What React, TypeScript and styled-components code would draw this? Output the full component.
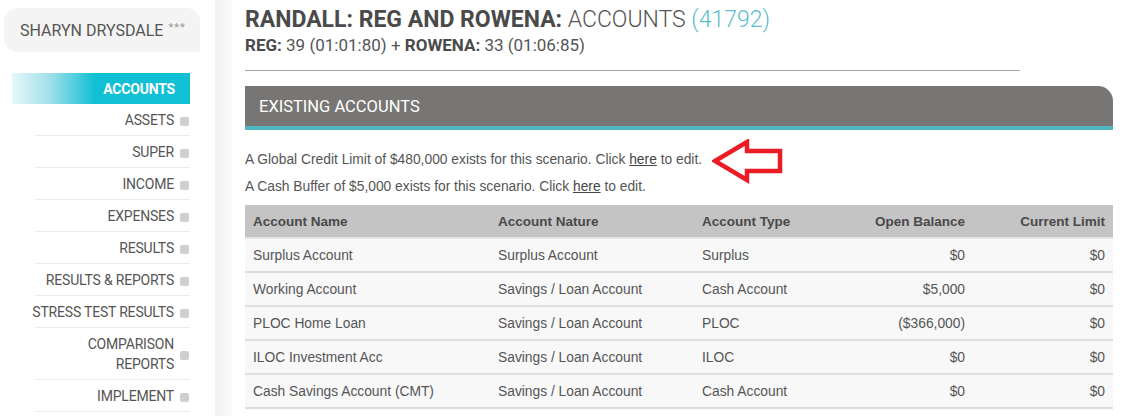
import styled, { createGlobalStyle } from 'styled-components'

const GlobalStyle = createGlobalStyle`
  html, body {
    margin: 0;
    padding: 0;
    background: #fff;
  }
  body {
    font-family: Roboto, 'Liberation Sans', sans-serif;
    color: #555;
  }
`

const Page = styled.div`
  display: flex;
  width: 1128px;
  min-height: 416px;
  overflow: hidden;
`

const Sidebar = styled.aside`
  width: 215px;
  flex-shrink: 0;
  padding-top: 8px;
  box-sizing: border-box;
`

const UserBox = styled.div`
  margin-left: 4px;
  width: 196px;
  height: 44px;
  box-sizing: border-box;
  padding-left: 16px;
  display: flex;
  align-items: center;
  gap: 5px;
  background: #f4f4f4;
  border-radius: 14px 14px 0 14px;
  font-size: 16px;
  color: #555;
  white-space: nowrap;
`

const Stars = styled.span`
  font-size: 11px;
  color: #999;
  letter-spacing: 1px;
  position: relative;
  top: -3px;
`

const Nav = styled.nav`
  margin: 21px 0 0 12px;
  width: 178px;
`

const NavItem = styled.div<{ $active?: boolean }>`
  display: flex;
  align-items: center;
  justify-content: flex-end;
  gap: 6px;
  box-sizing: border-box;
  min-height: ${(p) => (p.$active ? 31 : 32)}px;
  padding: ${(p) => (p.$active ? '0 15px 0 0' : '6px 1px 5px 0')};
  margin-left: ${(p) => (p.$active ? 0 : 23)}px;
  font-size: 14px;
  letter-spacing: -0.2px;
  line-height: 20px;
  text-align: right;
  white-space: nowrap;
  color: ${(p) => (p.$active ? '#fff' : '#555')};
  font-weight: ${(p) => (p.$active ? 700 : 400)};
  background: ${(p) =>
    p.$active
      ? 'linear-gradient(to right, #e6f8fa 0%, #9fdfe9 22%, #12c0d6 46%, #12c0d6 100%)'
      : 'transparent'};
  border-bottom: ${(p) => (p.$active ? 'none' : '1px solid #ececec')};
`

const Bullet = styled.span`
  width: 9px;
  height: 9px;
  border-radius: 2px;
  background: #cfcfcf;
  flex-shrink: 0;
  margin-top: 3px;
`

const Gutter = styled.div`
  width: 17px;
  flex-shrink: 0;
  background: linear-gradient(to right, #f1f1f1, #fbfbfb);
`

const Main = styled.main`
  flex: 1;
  padding: 5px 15px 0 13px;
  min-width: 0;
`

const Title = styled.h1`
  margin: 0;
  font-size: 23px;
  line-height: 30px;
  font-weight: 300;
  color: #555;
  white-space: nowrap;
  b {
    font-weight: 700;
    color: #4a4a4a;
  }
`

const Count = styled.span`
  color: #5bbdca;
`

const Subtitle = styled.div`
  font-size: 17px;
  line-height: 20px;
  color: #555;
  b {
    font-weight: 700;
    color: #4a4a4a;
  }
`

const Rule = styled.hr`
  width: 775px;
  margin: 15px 0 0;
  border: none;
  border-top: 1px solid #a2a2a2;
`

const SectionBar = styled.div`
  margin-top: 15px;
  height: 40px;
  display: flex;
  align-items: center;
  padding-left: 14px;
  background: #787674;
  border-bottom: 4px solid #4db8c4;
  border-top-right-radius: 15px;
  color: #fff;
  font-size: 16.5px;
`

const Info = styled.div`
  position: relative;
  padding-top: 16px;
  font-family: 'Liberation Sans', Arial, sans-serif;
  font-size: 13.8px;
  line-height: 27px;
  color: #555;
  a {
    color: #444;
    text-decoration: underline;
  }
`

const Arrow = styled.svg`
  position: absolute;
  left: 467px;
  top: 9px;
`

const Table = styled.table`
  margin-top: 5px;
  width: 100%;
  table-layout: fixed;
  border-collapse: collapse;
  font-family: 'Liberation Sans', Arial, sans-serif;
  font-size: 13.8px;
  color: #555;
`

const Th = styled.th<{ $right?: boolean; $w: number }>`
  height: 33px;
  padding: 0 8px;
  background: #c4c4c4;
  color: #4a4a4a;
  font-weight: 700;
  font-size: 13.5px;
  text-align: ${(p) => (p.$right ? 'right' : 'left')};
  width: ${(p) => p.$w}px;
  box-sizing: border-box;
  border-bottom: 2px solid #e4e4e4;
`

const Td = styled.td<{ $right?: boolean }>`
  height: 32px;
  padding: 0 8px;
  background: #f8f8f8;
  text-align: ${(p) => (p.$right ? 'right' : 'left')};
  white-space: nowrap;
  border-bottom: 2px solid #dedede;
`

const navItems = [
  'ASSETS',
  'SUPER',
  'INCOME',
  'EXPENSES',
  'RESULTS',
  'RESULTS & REPORTS',
  'STRESS TEST RESULTS',
  'COMPARISON|REPORTS',
  'IMPLEMENT',
]

const rows = [
  ['Surplus Account', 'Surplus Account', 'Surplus', '$0', '$0'],
  ['Working Account', 'Savings / Loan Account', 'Cash Account', '$5,000', '$0'],
  ['PLOC Home Loan', 'Savings / Loan Account', 'PLOC', '($366,000)', '$0'],
  ['ILOC Investment Acc', 'Savings / Loan Account', 'ILOC', '$0', '$0'],
  ['Cash Savings Account (CMT)', 'Savings / Loan Account', 'Cash Account', '$0', '$0'],
]

export default function App() {
  return (
    <>
      <GlobalStyle />
      <Page>
        <Sidebar>
          <UserBox>
            SHARYN DRYSDALE <Stars>***</Stars>
          </UserBox>
          <Nav>
            <NavItem $active>ACCOUNTS</NavItem>
            {navItems.map((item) => (
              <NavItem key={item}>
                <span>
                  {item.split('|').map((part, i) => (
                    <span key={part}>
                      {i > 0 && <br />}
                      {part}
                    </span>
                  ))}
                </span>
                <Bullet />
              </NavItem>
            ))}
          </Nav>
        </Sidebar>
        <Gutter />
        <Main>
          <Title>
            <b>RANDALL: REG AND ROWENA:</b> ACCOUNTS <Count>(41792)</Count>
          </Title>
          <Subtitle>
            <b>REG:</b> 39 (01:01:80) + <b>ROWENA:</b> 33 (01:06:85)
          </Subtitle>
          <Rule />
          <SectionBar>EXISTING ACCOUNTS</SectionBar>
          <Info>
            <div>
              A Global Credit Limit of $480,000 exists for this scenario. Click <a href="#">here</a> to edit.
            </div>
            <div>
              A Cash Buffer of $5,000 exists for this scenario. Click <a href="#">here</a> to edit.
            </div>
            <Arrow width="72" height="46" viewBox="0 0 72 46">
              <polygon
                points="3,22 35,3 35,12 68,12 68,32 35,32 35,41"
                fill="none"
                stroke="#ec1c24"
                strokeWidth="4.5"
                strokeLinejoin="miter"
              />
            </Arrow>
          </Info>
          <Table>
            <thead>
              <tr>
                <Th $w={245}>Account Name</Th>
                <Th $w={204}>Account Nature</Th>
                <Th $w={150}>Account Type</Th>
                <Th $right $w={129}>Open Balance</Th>
                <Th $right $w={140}>Current Limit</Th>
              </tr>
            </thead>
            <tbody>
              {rows.map((r) => (
                <tr key={r[0]}>
                  <Td>{r[0]}</Td>
                  <Td>{r[1]}</Td>
                  <Td>{r[2]}</Td>
                  <Td $right>{r[3]}</Td>
                  <Td $right>{r[4]}</Td>
                </tr>
              ))}
            </tbody>
          </Table>
        </Main>
      </Page>
    </>
  )
}
